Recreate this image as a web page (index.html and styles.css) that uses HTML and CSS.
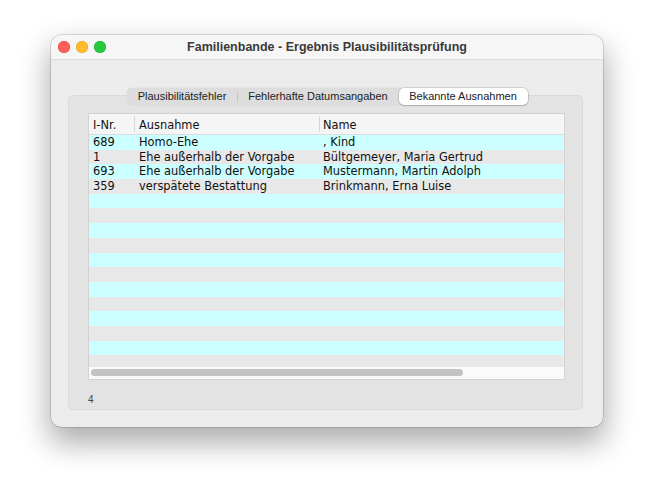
FILE: index.html
```html
<!DOCTYPE html>
<html lang="de">
<head>
<meta charset="utf-8">
<title>Familienbande - Ergebnis Plausibilitätsprüfung</title>
<link rel="stylesheet" href="styles.css">
</head>
<body>
<div class="window">
  <div class="titlebar">
    <div class="lights">
      <span class="light red"></span>
      <span class="light yellow"></span>
      <span class="light green"></span>
    </div>
    <div class="title">Familienbande - Ergebnis Plausibilitätsprüfung</div>
    <div></div>
  </div>
  <div class="content">
    <div class="tabs">
      <div class="tab t1">Plausibilitätsfehler</div>
      <div class="tab t2">Fehlerhafte Datumsangaben</div>
      <div class="tab t3 selected">Bekannte Ausnahmen</div>
    </div>
    <div class="group">
      <div class="table">
        <div class="thead">
          <div class="cell c1">I-Nr.</div>
          <div class="cell c2 hdiv">Ausnahme</div>
          <div class="cell c3 hdiv">Name</div>
        </div>
        <div class="rows">
          <div class="row"><div class="cell c1">689</div><div class="cell c2">Homo-Ehe</div><div class="cell c3">, Kind</div></div>
          <div class="row"><div class="cell c1">1</div><div class="cell c2">Ehe außerhalb der Vorgabe</div><div class="cell c3">Bültgemeyer, Maria Gertrud</div></div>
          <div class="row"><div class="cell c1">693</div><div class="cell c2">Ehe außerhalb der Vorgabe</div><div class="cell c3">Mustermann, Martin Adolph</div></div>
          <div class="row"><div class="cell c1">359</div><div class="cell c2">verspätete Bestattung</div><div class="cell c3">Brinkmann, Erna Luise</div></div>
          <div class="row"></div>
          <div class="row"></div>
          <div class="row"></div>
          <div class="row"></div>
          <div class="row"></div>
          <div class="row"></div>
          <div class="row"></div>
          <div class="row"></div>
          <div class="row"></div>
          <div class="row"></div>
          <div class="row"></div>
          <div class="row"></div>
        </div>
        <div class="hscroll"><div class="thumb"></div></div>
      </div>
      <div class="count">4</div>
    </div>
  </div>
</div>
</body>
</html>
```
FILE: styles.css
```css
* { box-sizing: border-box; }
html, body { margin: 0; padding: 0; background: #ffffff; }
body { font-family: "Liberation Sans", Arial, sans-serif; min-height: 496px; padding-top: 35px; }

.window {
  margin: 0 0 0 51px;
  width: 552px;
  height: 392px;
  border-radius: 10px;
  background: #ececec;
  box-shadow: 0 0 0 0.5px rgba(0,0,0,0.25), 0 14px 30px 2px rgba(0,0,0,0.33);
  display: flex;
  flex-direction: column;
}

.titlebar {
  height: 25px;
  flex: none;
  background: #f6f6f6;
  border-bottom: 1px solid #dedede;
  border-radius: 10px 10px 0 0;
  display: grid;
  grid-template-columns: 1fr auto 1fr;
  align-items: center;
}
.lights { display: flex; gap: 6px; padding-left: 7px; }
.light { width: 12px; height: 12px; border-radius: 50%; display: block; }
.red { background: #ff5f57; box-shadow: inset 0 0 0 0.5px #e2463f; }
.yellow { background: #febc2e; box-shadow: inset 0 0 0 0.5px #e1a116; }
.green { background: #28c840; box-shadow: inset 0 0 0 0.5px #1aab29; }
.title {
  font-weight: bold;
  font-size: 12.5px;
  color: #3a3a3a;
  white-space: nowrap;
}

.content {
  flex: 1;
  display: flex;
  flex-direction: column;
  align-items: center;
}

.tabs {
  margin-top: 28px;
  height: 17px;
  display: flex;
  background: #dddddd;
  border-radius: 5px;
  box-shadow: 0 0 0 0.5px rgba(0,0,0,0.05);
  position: relative;
  z-index: 1;
  font-size: 11px;
  color: #222;
}
.tab {
  height: 17px;
  line-height: 17px;
  text-align: center;
  white-space: nowrap;
  position: relative;
}
.t1 { width: 111px; }
.t2 { width: 161px; }
.t1::after {
  content: "";
  position: absolute;
  right: 0;
  top: 3px;
  bottom: 3px;
  width: 1px;
  background: #c6c6c6;
}
.t3 { width: 129px; }
.selected {
  background: #ffffff;
  border-radius: 5px;
  box-shadow: 0 0 0 0.5px rgba(0,0,0,0.18), 0 1px 1.5px rgba(0,0,0,0.15);
}

.group {
  align-self: stretch;
  margin: -10px 20px 17px 17px;
  flex: 1;
  background: #e3e3e3;
  border: 1px solid #dadada;
  border-radius: 5px;
  padding: 17px 17px 0 19px;
}

.table {
  height: 267px;
  border: 1px solid #d2d2d2;
  background: #ffffff;
  display: flex;
  flex-direction: column;
  font-family: "DejaVu Sans", Verdana, sans-serif;
  font-size: 11.4px;
  color: #111;
}
.thead {
  height: 21px;
  flex: none;
  background: #f5f5f5;
  border-bottom: 1px solid #dcdcdc;
  display: grid;
  grid-template-columns: 45px 185px 1fr;
  line-height: 22px;
}
.hdiv { position: relative; }
.hdiv::before {
  content: "";
  position: absolute;
  left: 0;
  top: 2px;
  bottom: 2px;
  width: 1px;
  background: #d6d6d6;
}
.cell { padding-left: 4px; white-space: nowrap; overflow: hidden; }
.c2 { padding-left: 5px; }

.rows { height: 232px; flex: none; overflow: hidden; }
.row {
  height: 14.7px;
  line-height: 15.5px;
  display: grid;
  grid-template-columns: 45px 185px 1fr;
  background: #ccffff;
}
.row:nth-child(even) { background: #e8e8e8; }

.hscroll {
  flex: 1;
  background: #fafafa;
  padding: 2px 0 0 2px;
}
.thumb {
  width: 372px;
  height: 7px;
  border-radius: 3.5px;
  background: #c2c2c2;
}

.count {
  margin-top: 14px;
  font-size: 10px;
  line-height: 12px;
  color: #444;
}
```
